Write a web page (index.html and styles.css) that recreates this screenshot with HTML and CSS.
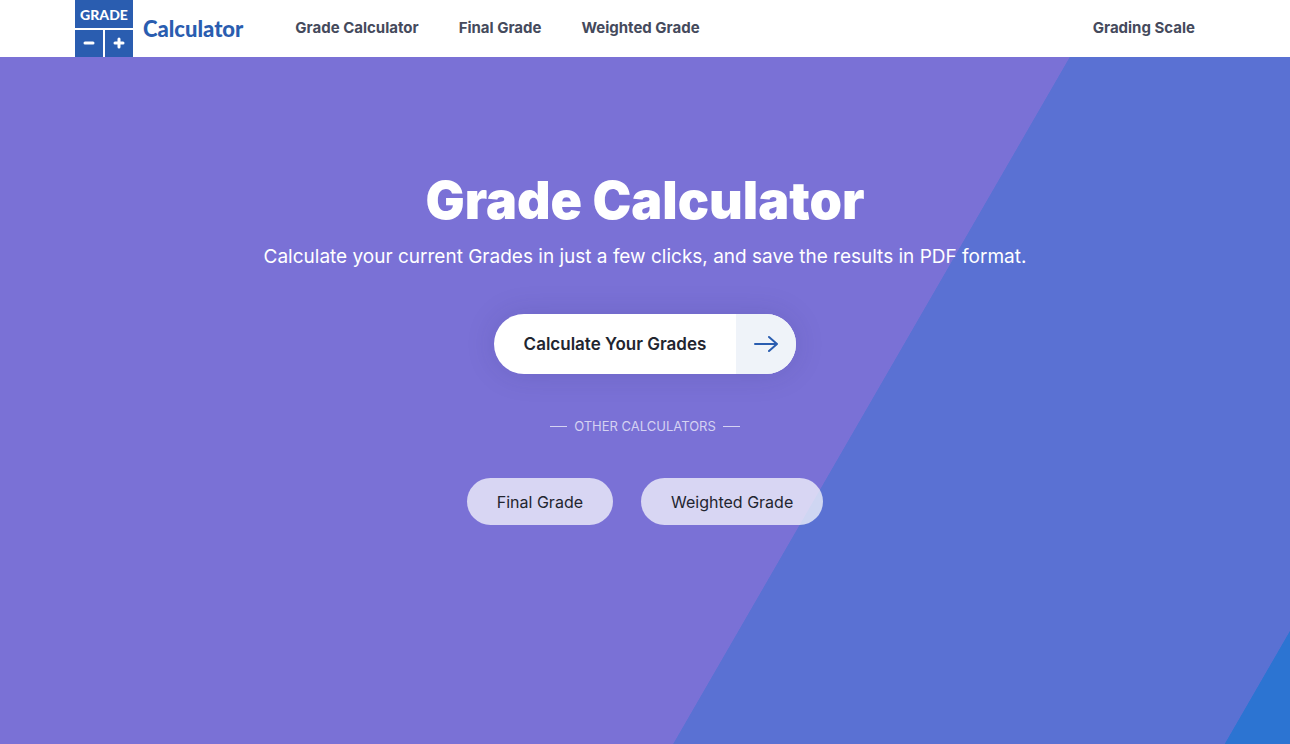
FILE: index.html
```html
<!DOCTYPE html>
<html lang="en">
<head>
  <meta charset="UTF-8">
  <meta name="viewport" content="width=device-width, initial-scale=1">
  <title>Grade Calculator</title>
  <link rel="stylesheet" href="styles.css">
</head>
<body>

  <header class="header">
    <div class="container">
      <a href="#" class="logo">
        <span class="logo-mark">
          <span class="logo-word">GRADE</span>
          <span class="logo-key">
            <svg width="12" height="14" viewBox="0 0 12 14"><path d="M2 6h8" /></svg>
          </span>
          <span class="logo-key">
            <svg width="12" height="14" viewBox="0 0 12 14"><path d="M2 6h8M6 2v8" /></svg>
          </span>
        </span>
        <span class="logo-name">Calculator</span>
      </a>
      <nav class="nav">
        <a href="#">Grade Calculator</a>
        <a href="#">Final Grade</a>
        <a href="#">Weighted Grade</a>
        <a href="#" class="nav-right">Grading Scale</a>
      </nav>
    </div>
  </header>

  <main class="hero">
    <h1>Grade Calculator</h1>
    <p class="lead">Calculate your current Grades in just a few clicks, and save the results in PDF format.</p>

    <button type="button" class="cta">
      <span class="cta-text">Calculate Your Grades</span>
      <span class="cta-arrow">
        <svg width="26" height="18" viewBox="0 0 26 18"><path d="M2 9h22M16 2l8 7-8 7" /></svg>
      </span>
    </button>

    <div class="divider">OTHER CALCULATORS</div>

    <div class="pills">
      <button type="button" class="pill">Final Grade</button>
      <button type="button" class="pill">Weighted Grade</button>
    </div>
  </main>

</body>
</html>
```
FILE: styles.css
```css
* {
  box-sizing: border-box;
}

body {
  margin: 0;
  min-height: 100vh;
  display: flex;
  flex-direction: column;
  font-family: Inter, "Open Sans", sans-serif;
  color: #22252f;
}

a {
  text-decoration: none;
}

button {
  border: none;
  padding: 0;
  font-family: inherit;
  color: inherit;
  cursor: pointer;
}

svg {
  display: block;
  fill: none;
}

.header {
  background: #fff;
}

.container {
  display: flex;
  align-items: center;
  width: 100%;
  max-width: 1140px;
  margin: 0 auto;
}

/* logo */
.logo {
  display: flex;
  align-items: center;
  gap: 10px;
  color: #2a5db0;
  font-family: Lato, sans-serif;
  font-weight: 900;
}

.logo-mark {
  display: grid;
  grid-template-columns: 28px 28px;
  grid-template-rows: 28px 27px;
  gap: 2px;
  color: #fff;
}

.logo-word,
.logo-key {
  display: flex;
  align-items: center;
  justify-content: center;
  background: #2a5db0;
}

.logo-word {
  grid-column: 1 / 3;
  font-size: 14px;
}

.logo-key svg {
  stroke: #fff;
  stroke-width: 3;
  stroke-linecap: round;
}

.logo-name {
  font-size: 22px;
}

/* navigation */
.nav {
  display: flex;
  flex: 1;
  margin-left: 32px;
}

.nav a {
  padding: 18px 20px 19px;
  font-size: 15px;
  font-weight: 700;
  line-height: 20px;
  color: #454a5c;
}

.nav .nav-right {
  margin-left: auto;
}

/* hero */
.hero {
  flex: 1;
  display: flex;
  flex-direction: column;
  align-items: center;
  padding: 114px 20px 60px;
  text-align: center;
  background: linear-gradient(120deg, #7a71d6 63.4%, #5a71d3 63.45%, #5a71d3 96.1%, #2c74d2 96.15%);
}

h1 {
  margin: 0 0 12px;
  font-size: 52px;
  font-weight: 900;
  line-height: 60px;
  color: #fff;
}

.lead {
  margin: 0 0 43px;
  font-size: 19px;
  font-weight: 400;
  line-height: 28px;
  color: #fff;
}

.cta {
  display: flex;
  height: 60px;
  border-radius: 30px;
  overflow: hidden;
  background: #fff;
  box-shadow: 0 0 30px rgba(40, 40, 100, 0.15);
}

.cta-text {
  padding: 0 30px;
  font-size: 17px;
  font-weight: 600;
  line-height: 60px;
}

.cta-arrow {
  display: flex;
  align-items: center;
  justify-content: center;
  width: 60px;
  height: 60px;
  background: #eff3f9;
}

.cta-arrow svg {
  stroke: #2a5db0;
  stroke-width: 2;
  stroke-linecap: round;
  stroke-linejoin: round;
}

.divider {
  display: flex;
  align-items: center;
  gap: 7px;
  margin: 42px 0;
  font-size: 13px;
  line-height: 20px;
  color: #d5d2f2;
}

.divider::before,
.divider::after {
  content: "";
  width: 17px;
  height: 1px;
  background: #d5d2f2;
}

.pills {
  display: flex;
  flex-wrap: wrap;
  justify-content: center;
  gap: 28px;
}

.pill {
  height: 47px;
  padding: 0 30px;
  border-radius: 24px;
  font-size: 16px;
  background: rgba(255, 255, 255, 0.71);
}
```
